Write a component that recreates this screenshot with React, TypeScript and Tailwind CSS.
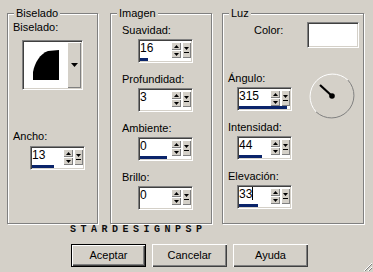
import React from "react";

const BG = "bg-[#d4d0c8]";

const Frame = ({ title, className, children }: { title: string; className: string; children: React.ReactNode }) => (
  <div className={`relative h-[211px] border border-[#808080] shadow-[inset_1px_1px_0_#fff,1px_1px_0_#fff] flex flex-col items-start ${className}`}>
    <span className={`absolute top-[-7px] left-[6px] px-[2px] leading-[13px] ${BG}`}>{title}</span>
    {children}
  </div>
);

const Raised = "bg-[#d4d0c8] shadow-[inset_1px_1px_0_#fff,inset_-1px_-1px_0_#808080]";

const Spin = ({ value, bar, caret }: { value: string; bar: number; caret?: boolean }) => (
  <div className="w-[55px] h-[24px] bg-white border border-t-[#808080] border-l-[#808080] border-b-white border-r-white shadow-[inset_1px_1px_0_#404040,inset_-1px_-1px_0_#d4d0c8] p-px flex flex-col">
    <div className="flex h-[17px]">
      <div className="flex-1 flex items-start text-[12px] leading-[14px]">
        <span>{value}</span>
        {caret && <span className="w-px h-[13px] bg-black" />}
      </div>
      <div className="flex flex-col w-[10px] mt-px">
        <div className={`h-[8px] flex items-center justify-center ${Raised}`}>
          <svg width="5" height="3" viewBox="0 0 5 3"><path d="M2.5 0 L5 3 L0 3 Z" fill="#000" /></svg>
        </div>
        <div className={`h-[8px] flex items-center justify-center ${Raised}`}>
          <svg width="5" height="3" viewBox="0 0 5 3"><path d="M0 0 L5 0 L2.5 3 Z" fill="#000" /></svg>
        </div>
      </div>
      <div className={`w-[9px] h-[16px] mt-px ml-px flex flex-col items-center justify-center gap-[2px] ${Raised}`}>
        <svg width="5" height="3" viewBox="0 0 5 3"><path d="M0 0 L5 0 L2.5 3 Z" fill="#000" /></svg>
        <div className="w-[5px] h-px bg-black" />
      </div>
    </div>
    <div className="h-[3px] flex">
      <div className="h-full bg-[#0a246a]" style={{ width: bar }} />
    </div>
  </div>
);

const Field = ({ label, value, bar, caret, first }: { label: string; value: string; bar: number; caret?: boolean; first?: boolean }) => (
  <>
    <span className={`leading-[13px] ${first ? "" : "mt-[10px]"}`}>{label}</span>
    <div className="mt-[2px] ml-[16px]">
      <Spin value={value} bar={bar} caret={caret} />
    </div>
  </>
);

const Button = ({ children, isDefault }: { children: string; isDefault?: boolean }) => (
  <button
    className={`w-[75px] h-[23px] text-[11px] ${BG} ${
      isDefault
        ? "border border-black shadow-[inset_1px_1px_0_#fff,inset_-1px_-1px_0_#404040,inset_-2px_-2px_0_#808080]"
        : "shadow-[inset_1px_1px_0_#fff,inset_-1px_-1px_0_#404040,inset_-2px_-2px_0_#808080]"
    }`}
  >
    {children}
  </button>
);

export default function App() {
  return (
    <div className={`relative w-[373px] h-[272px] ${BG} text-black text-[11px] font-['Liberation_Sans',Arial,sans-serif] flex flex-col overflow-hidden`}>
      <div className="flex pt-[13px] pl-[7px]">
        {/* Biselado */}
        <Frame title="Biselado" className="w-[91px] pl-[5px] pt-[7px]">
          <span className="leading-[13px]">Biselado:</span>
          <div className="mt-[6px] ml-[9px] w-[61px] h-[50px] flex bg-white border border-t-[#808080] border-l-[#808080] border-b-white border-r-white shadow-[inset_1px_1px_0_#404040,inset_-1px_-1px_0_#d4d0c8] p-px">
            <div className="flex-1 flex items-center justify-center">
              <svg width="26" height="30" viewBox="0 0 26 30">
                <path d="M0 30 L0 22 C2 12 7 4 15 1 L26 0 L26 30 Z" fill="#000" />
              </svg>
            </div>
            <div className={`w-[14px] flex items-center justify-center ${Raised}`}>
              <svg width="7" height="4" viewBox="0 0 7 4"><path d="M0 0 L7 0 L3.5 4 Z" fill="#000" /></svg>
            </div>
          </div>
          <span className="mt-[40px] leading-[13px]">Ancho:</span>
          <div className="mt-[3px] ml-[17px]">
            <Spin value="13" bar={22} />
          </div>
        </Frame>

        {/* Imagen */}
        <Frame title="Imagen" className="ml-[12px] w-[102px] pl-[11px] pt-[10px]">
          <Field first label="Suavidad:" value="16" bar={8} />
          <Field label="Profundidad:" value="3" bar={0} />
          <Field label="Ambiente:" value="0" bar={27} />
          <Field label="Brillo:" value="0" bar={0} />
        </Frame>

        {/* Luz */}
        <Frame title="Luz" className="ml-[10px] w-[142px] pt-[8px]">
          <div className="flex w-full pr-[4px]">
            <span className="ml-[31px] mt-[2px] leading-[13px]">Color:</span>
            <div className="ml-auto w-[52px] h-[26px] bg-white border border-t-[#808080] border-l-[#808080] border-b-white border-r-white shadow-[inset_1px_1px_0_#404040,inset_-1px_-1px_0_#d4d0c8]" />
          </div>
          <div className="flex w-full mt-[24px]">
            <div className="flex flex-col items-start pl-[5px] [&>div]:ml-[9px]">
              <Field first label="Ángulo:" value="315" bar={48} />
              <Field label="Intensidad:" value="44" bar={23} />
              <Field label="Elevación:" value="33" bar={19} caret />
            </div>
            <svg className="ml-auto mr-[7px]" width="48" height="48" viewBox="0 0 48 48">
              <path d="M8.1 39.9 A22.5 22.5 0 0 1 39.9 8.1" fill="none" stroke="#fff" strokeWidth="1" />
              <path d="M39.9 8.1 A22.5 22.5 0 0 1 8.1 39.9" fill="none" stroke="#808080" strokeWidth="1" />
              <line x1="12" y1="13" x2="24" y2="24" stroke="#000" strokeWidth="2.2" />
              <circle cx="24" cy="24" r="2.8" fill="#000" />
            </svg>
          </div>
        </Frame>
      </div>

      <div className="pl-[70px] mt-[1px] font-['Liberation_Mono',monospace] font-bold text-[10px] leading-[10px] tracking-[4.5px] text-[#111]">
        STARDESIGNPSP
      </div>

      <div className="flex pl-[71px] mt-[9px] gap-[6px]">
        <Button isDefault>Aceptar</Button>
        <Button>Cancelar</Button>
        <Button>Ayuda</Button>
      </div>

      <svg className="absolute right-0 bottom-0" width="11" height="11" viewBox="0 0 11 11">
        <path d="M10 2 L2 10 M10 6 L6 10" stroke="#fff" strokeWidth="1" />
        <path d="M10 3 L3 10 M10 7 L7 10" stroke="#808080" strokeWidth="1" />
      </svg>
    </div>
  );
}
